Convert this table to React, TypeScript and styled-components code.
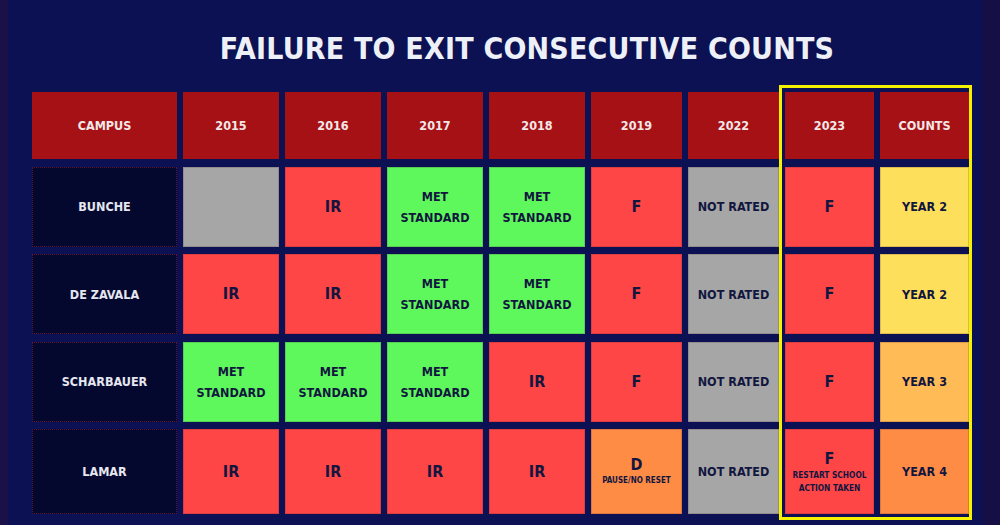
import React from "react";
import styled, { createGlobalStyle } from "styled-components";

const GlobalStyle = createGlobalStyle`
  html, body { margin: 0; padding: 0; background: #0b1152; }
  body { font-family: "DejaVu Sans Condensed", "DejaVu Sans", sans-serif; }
`;

const Page = styled.div`
  display: flex;
  width: 1000px;
  height: 525px;
  overflow: hidden;
`;

const EdgeStrip = styled.div<{ $w: number; $bg: string }>`
  flex: 0 0 ${(p) => p.$w}px;
  background: ${(p) => p.$bg};
`;

const Main = styled.div`
  flex: 1;
  background: #0b1152;
  display: flex;
  flex-direction: column;
  padding-top: 34px;
`;

const Title = styled.h1`
  margin: 0;
  padding-left: 63px;
  text-align: center;
  font-family: "DejaVu Sans Condensed", "DejaVu Sans", sans-serif;
  font-weight: 700;
  font-size: 30px;
  line-height: 30px;
  color: #eef0f8;
  letter-spacing: 0.2px;
`;

const TableWrap = styled.div`
  position: relative;
  margin: 28px 0 0 24px;
  width: 936px;
`;

const Grid = styled.div`
  display: grid;
  grid-template-columns: 145px 96px 96px 96px 96px 91px 91px 89px 89px;
  grid-template-rows: 67px 80px 80px 80px 85px;
  column-gap: 6px;
  row-gap: 7.5px;
`;

const Cell = styled.div`
  display: flex;
  flex-direction: column;
  align-items: center;
  justify-content: center;
  text-align: center;
  font-weight: 700;
  font-size: 12.5px;
  line-height: 21px;
`;

const HeaderCell = styled(Cell)`
  background: #a61115;
  color: #f2e8e8;
`;

const CampusCell = styled(Cell)`
  background: #04082f;
  color: #e6e6f0;
  border: 1px dotted #5b1436;
`;

const tones: Record<string, string> = {
  gray: "#a6a6a6",
  red: "#ff4647",
  green: "#5ef85c",
  yellow: "#fedf5b",
  amber: "#ffbb56",
  orange: "#ff8c45",
};

const DataCell = styled(Cell)<{ $tone: string }>`
  background: ${(p) => tones[p.$tone]};
  color: #12163f;
  border: 1px solid rgba(60, 20, 40, 0.18);
`;

const Big = styled.span`
  font-size: 16px;
  line-height: 20px;
`;

const Note = styled.span<{ $size: number }>`
  font-size: ${(p) => p.$size}px;
  line-height: 12.5px;
`;

const Highlight = styled.div`
  position: absolute;
  left: 747px;
  top: -7px;
  width: 193px;
  height: 435px;
  box-sizing: border-box;
  border: 3px solid #f4f200;
  pointer-events: none;
`;

type Val = { tone: string; text?: string; big?: boolean; note?: string; noteSize?: number };

const headers = ["CAMPUS", "2015", "2016", "2017", "2018", "2019", "2022", "2023", "COUNTS"];

const MET: Val = { tone: "green", text: "MET\nSTANDARD" };
const IR: Val = { tone: "red", text: "IR", big: true };
const F: Val = { tone: "red", text: "F", big: true };
const NR: Val = { tone: "gray", text: "NOT RATED" };

const rows: { name: string; vals: Val[] }[] = [
  {
    name: "BUNCHE",
    vals: [{ tone: "gray" }, IR, MET, MET, F, NR, F, { tone: "yellow", text: "YEAR 2" }],
  },
  {
    name: "DE ZAVALA",
    vals: [IR, IR, MET, MET, F, NR, F, { tone: "yellow", text: "YEAR 2" }],
  },
  {
    name: "SCHARBAUER",
    vals: [MET, MET, MET, IR, F, NR, F, { tone: "amber", text: "YEAR 3" }],
  },
  {
    name: "LAMAR",
    vals: [
      IR,
      IR,
      IR,
      IR,
      { tone: "orange", text: "D", big: true, note: "PAUSE/NO RESET", noteSize: 8 },
      NR,
      { tone: "red", text: "F", big: true, note: "RESTART SCHOOL\nACTION TAKEN", noteSize: 8.3 },
      { tone: "orange", text: "YEAR 4" },
    ],
  },
];

const Lines = ({ text }: { text: string }) => (
  <>
    {text.split("\n").map((l, i) => (
      <span key={i}>{l}</span>
    ))}
  </>
);

export default function App() {
  return (
    <>
      <GlobalStyle />
      <Page>
        <EdgeStrip $w={8} $bg="#1a1148" />
        <Main>
          <Title>FAILURE TO EXIT CONSECUTIVE COUNTS</Title>
          <TableWrap>
            <Grid>
              {headers.map((h) => (
                <HeaderCell key={h}>{h}</HeaderCell>
              ))}
              {rows.map((r) => (
                <React.Fragment key={r.name}>
                  <CampusCell>{r.name}</CampusCell>
                  {r.vals.map((v, i) => (
                    <DataCell key={i} $tone={v.tone}>
                      {v.big ? <Big>{v.text}</Big> : v.text ? <Lines text={v.text} /> : null}
                      {v.note &&
                        v.note.split("\n").map((n, j) => (
                          <Note key={j} $size={v.noteSize || 8}>
                            {n}
                          </Note>
                        ))}
                    </DataCell>
                  ))}
                </React.Fragment>
              ))}
            </Grid>
            <Highlight />
          </TableWrap>
        </Main>
        <EdgeStrip $w={17} $bg="#150f46" />
      </Page>
    </>
  );
}
